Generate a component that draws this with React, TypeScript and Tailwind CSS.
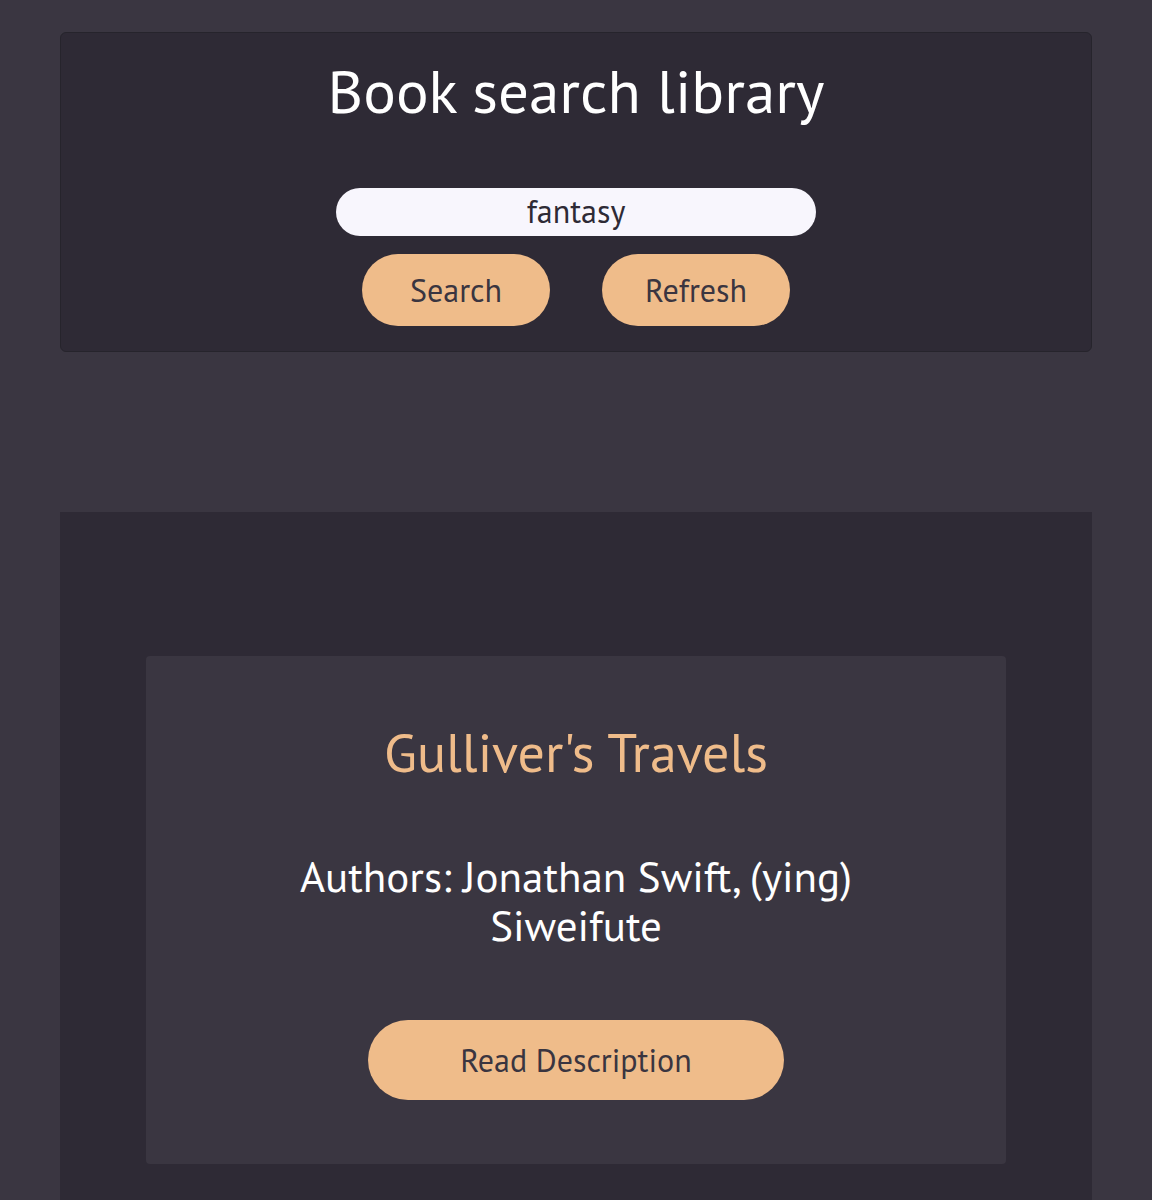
import React from "react";

const pill =
  "rounded-full bg-[#efbc8a] text-[#3a3540] flex items-center justify-center";

export default function App() {
  return (
    <div className="min-h-[1200px] bg-[#3a3641] px-[60px] pt-[32px] font-['PT_Sans','Lato',sans-serif]">
      <header className="flex h-[320px] flex-col items-center rounded-md border border-[#26242c] bg-[#2e2a35] pt-[20px]">
        <h1 className="text-[61px] leading-[76px] text-white">Book search library</h1>
        <input
          readOnly
          value="fantasy"
          className="mt-[59px] h-[48px] w-[480px] rounded-full bg-[#f8f6fd] pb-[2px] text-center text-[32px] text-[#2e2a35] outline-none"
        />
        <div className="mt-[18px] flex gap-[52px]">
          <button className={`${pill} h-[72px] w-[188px] text-[32px]`}>Search</button>
          <button className={`${pill} h-[72px] w-[188px] text-[32px]`}>Refresh</button>
        </div>
      </header>

      <section className="mt-[160px] bg-[#2e2a35] px-[86px] pt-[144px] pb-[40px]">
        <article className="flex h-[508px] flex-col items-center rounded bg-[#3a3641] pt-[62px] text-center">
          <h2 className="text-[54px] leading-[68px] text-[#efbc8a]">Gulliver's Travels</h2>
          <p className="mt-[66px] w-[600px] text-[43px] leading-[49px] text-white">
            Authors: Jonathan Swift, (ying) Siweifute
          </p>
          <button className={`${pill} mt-[70px] h-[80px] w-[416px] text-[32px]`}>
            Read Description
          </button>
        </article>
      </section>
    </div>
  );
}
